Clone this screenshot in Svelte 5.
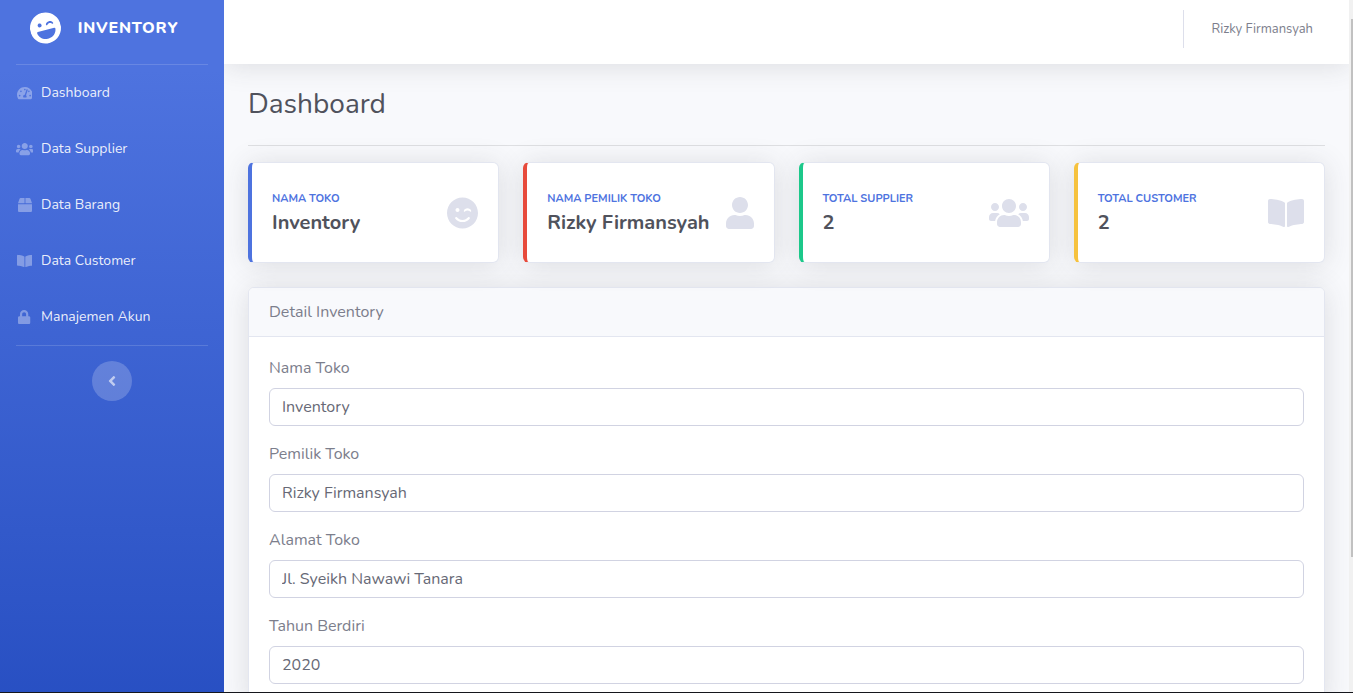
<script>
  const icons = {
    laugh: { w: 496, d: 'M248 8C111 8 0 119 0 256s111 248 248 248 248-111 248-248S385 8 248 8zm20.1 198.1c4-25.2 34.2-42.1 59.9-42.1s55.9 16.9 59.9 42.1c1.7 11.1-11.4 18.3-19.8 10.8l-9.5-8.5c-14.8-13.2-46.2-13.2-61 0L288 217c-8.4 7.4-21.6.3-19.9-10.9zM168 160c17.7 0 32 14.3 32 32s-14.3 32-32 32-32-14.3-32-32 14.3-32 32-32zm88 272h-16c-73.4 0-134-55-142.9-126-1.2-9.5 6.3-18 15.9-18h270c9.6 0 17.1 8.4 15.9 18-8.9 71-69.5 126-142.9 126z' },
    gauge: { w: 576, d: 'M288 32C128.94 32 0 160.94 0 320c0 52.8 14.25 102.26 39.06 144.8 5.61 9.62 16.3 15.2 27.44 15.2h443c11.14 0 21.83-5.58 27.44-15.2C561.75 422.26 576 372.8 576 320c0-159.06-128.94-288-288-288zm0 64c14.71 0 26.58 10.13 30.32 23.65-1.11 2.26-2.64 4.23-3.45 6.67l-9.22 27.67c-5.13 3.49-10.97 6.01-17.64 6.01-17.67 0-32-14.33-32-32S270.33 96 288 96zM96 384c-17.67 0-32-14.33-32-32s14.33-32 32-32 32 14.33 32 32-14.33 32-32 32zm48-160c-17.67 0-32-14.33-32-32s14.33-32 32-32 32 14.33 32 32-14.33 32-32 32zm246.77-72.41l-61.33 184C343.13 347.33 352 364.54 352 384c0 11.72-3.38 22.55-8.88 32H232.88c-5.5-9.45-8.88-20.28-8.88-32 0-33.94 26.5-61.43 59.9-63.59l61.34-184.01c4.17-12.56 17.73-19.45 30.36-15.17 12.57 4.19 19.35 17.79 15.17 30.36zm14.66 57.2l15.52-46.55c3.47-1.29 7.13-2.23 11.05-2.23 17.67 0 32 14.33 32 32s-14.33 32-32 32c-11.38-.01-20.89-6.28-26.57-15.22zM480 384c-17.67 0-32-14.33-32-32s14.33-32 32-32 32 14.33 32 32-14.33 32-32 32z' },
    users: { w: 640, d: 'M96 224c35.3 0 64-28.7 64-64s-28.7-64-64-64-64 28.7-64 64 28.7 64 64 64zm448 0c35.3 0 64-28.7 64-64s-28.7-64-64-64-64 28.7-64 64 28.7 64 64 64zm32 32h-64c-17.6 0-33.5 7.1-45.1 18.6 40.3 22.1 68.9 62 75.1 109.4h66c17.7 0 32-14.3 32-32v-32c0-35.3-28.7-64-64-64zm-256 0c61.9 0 112-50.1 112-112S381.9 32 320 32 208 82.1 208 144s50.1 112 112 112zm76.8 32h-8.3c-20.8 10-43.9 16-68.5 16s-47.6-6-68.5-16h-8.3C179.6 288 128 339.6 128 403.2V432c0 26.5 21.5 48 48 48h288c26.5 0 48-21.5 48-48v-28.8c0-63.6-51.6-115.2-115.2-115.2zm-223.7-13.4C161.5 263.1 145.6 256 128 256H64c-35.3 0-64 28.7-64 64v32c0 17.7 14.3 32 32 32h65.9c6.3-47.4 34.9-87.3 75.2-109.4z' },
    box: { w: 512, d: 'M509.5 184.6L458.9 32.8C452.4 13.2 434.1 0 413.4 0H272v192h238.7c-.4-2.5-.4-5-1.2-7.4zM240 0H98.6c-20.7 0-39 13.2-45.5 32.8L2.5 184.6c-.8 2.4-.8 4.9-1.2 7.4H240V0zM0 224v240c0 26.5 21.5 48 48 48h416c26.5 0 48-21.5 48-48V224H0z' },
    book: { w: 576, d: 'M542.22 32.05c-54.8 3.11-163.72 14.43-230.96 55.59-4.64 2.84-7.27 7.89-7.27 13.17v363.87c0 11.55 12.63 18.85 23.28 13.49 69.18-34.82 169.23-44.32 218.7-46.92 16.89-.89 30.02-14.43 30.02-30.66V62.75c.01-17.71-15.35-31.74-33.77-30.7zM264.73 87.64C197.5 46.48 88.58 35.17 33.78 32.05 15.36 31.01 0 45.04 0 62.75V400.6c0 16.24 13.13 29.78 30.02 30.66 49.49 2.6 149.59 12.11 218.77 46.95 10.62 5.35 23.21-1.94 23.21-13.46V100.63c0-5.29-2.62-10.14-7.27-12.99z' },
    lock: { w: 448, d: 'M400 224h-24v-72C376 68.2 307.8 0 224 0S72 68.2 72 152v72H48c-26.5 0-48 21.5-48 48v192c0 26.5 21.5 48 48 48h352c26.5 0 48-21.5 48-48V272c0-26.5-21.5-48-48-48zm-104 0H152v-72c0-39.7 32.3-72 72-72s72 32.3 72 72v72z' },
    smile: { w: 496, d: 'M0 256c0 137 111 248 248 248s248-111 248-248S385 8 248 8 0 119 0 256zm200-48c0 17.7-14.3 32-32 32s-32-14.3-32-32 14.3-32 32-32 32 14.3 32 32zm158.5 16.5c-14.8-13.2-46.2-13.2-61 0L288 233c-8.3 7.4-21.6.4-19.8-10.8 4-25.2 34.2-42.1 59.9-42.1S384 197 388 222.2c1.7 11-11.4 18.3-19.8 10.8l-9.7-8.5zM157.8 325.8C180.2 352.7 213 368 248 368s67.8-15.4 90.2-42.2c13.6-16.2 38.1 4.2 24.6 20.5C334.3 380.4 292.5 400 248 400s-86.3-19.5-114.8-53.8c-13.6-16.2 11-36.7 24.6-20.4z' },
    user: { w: 448, d: 'M224 256c70.7 0 128-57.3 128-128S294.7 0 224 0 96 57.3 96 128s57.3 128 128 128zm89.6 32h-16.7c-22.2 10.2-46.9 16-72.9 16s-50.6-5.8-72.9-16h-16.7C60.2 288 0 348.2 0 422.4V464c0 26.5 21.5 48 48 48h352c26.5 0 48-21.5 48-48v-41.6c0-74.2-60.2-134.4-134.4-134.4z' },
    left: { w: 256, d: 'M31.7 239l136-136c9.4-9.4 24.6-9.4 33.9 0l22.6 22.6c9.4 9.4 9.4 24.6 0 33.9L127.9 256l96.4 96.4c9.4 9.4 9.4 24.6 0 33.9L201.7 409c-9.4 9.4-24.6 9.4-33.9 0l-136-136c-9.5-9.4-9.5-24.6-.1-34z' }
  };

  const menu = [
    { icon: 'gauge', label: 'Dashboard' },
    { icon: 'users', label: 'Data Supplier' },
    { icon: 'box', label: 'Data Barang' },
    { icon: 'book', label: 'Data Customer' },
    { icon: 'lock', label: 'Manajemen Akun' }
  ];

  const cards = [
    { tone: 'primary', icon: 'smile', label: 'Nama Toko', value: 'Inventory' },
    { tone: 'danger', icon: 'user', label: 'Nama Pemilik Toko', value: 'Rizky Firmansyah' },
    { tone: 'success', icon: 'users', label: 'Total Supplier', value: '2' },
    { tone: 'warning', icon: 'book', label: 'Total Customer', value: '2' }
  ];

  let fields = $state([
    { id: 'nama', label: 'Nama Toko', value: 'Inventory' },
    { id: 'pemilik', label: 'Pemilik Toko', value: 'Rizky Firmansyah' },
    { id: 'alamat', label: 'Alamat Toko', value: 'Jl. Syeikh Nawawi Tanara' },
    { id: 'tahun', label: 'Tahun Berdiri', value: '2020' }
  ]);
</script>

{#snippet icon(name)}
  <svg class="icon" viewBox="0 0 {icons[name].w} 512" aria-hidden="true"><path d={icons[name].d} /></svg>
{/snippet}

<div class="page">
  <nav class="sidebar">
    <a class="brand" href="#top">
      <span class="logo">{@render icon('laugh')}</span>
      <span>INVENTORY</span>
    </a>
    <hr />
    <ul>
      {#each menu as item}
        <li>
          <a href="#{item.icon}"><span class="mark">{@render icon(item.icon)}</span>{item.label}</a>
        </li>
      {/each}
    </ul>
    <hr />
    <button class="toggle" aria-label="Toggle sidebar">{@render icon('left')}</button>
  </nav>

  <div class="content">
    <header class="topbar">
      <a class="account" href="#account">Rizky Firmansyah</a>
    </header>

    <main>
      <h1>Dashboard</h1>
      <hr />
      <section class="cards">
        {#each cards as card}
          <article class="card {card.tone}">
            <div class="info">
              <h2>{card.label}</h2>
              <p>{card.value}</p>
            </div>
            {@render icon(card.icon)}
          </article>
        {/each}
      </section>

      <section class="detail">
        <h2>Detail Inventory</h2>
        <form>
          {#each fields as field}
            <div class="field">
              <label for={field.id}>{field.label}</label>
              <input id={field.id} type="text" bind:value={field.value} />
            </div>
          {/each}
        </form>
      </section>
    </main>
  </div>

  <div class="track"><div class="thumb"></div></div>
</div>

<style>
  :global(body) {
    margin: 0;
  }

  .page {
    box-sizing: border-box;
    display: flex;
    height: 100vh;
    overflow: hidden;
    border-bottom: 1px solid #15161c;
    background: #f8f9fc;
    color: #7c7e8c;
    font-family: Nunito, Lato, sans-serif;
    font-size: 16px;
    line-height: 24px;
  }

  .page :global(*) {
    box-sizing: border-box;
  }

  a {
    color: inherit;
    text-decoration: none;
  }

  h1,
  h2,
  p,
  ul,
  hr {
    margin: 0;
    padding: 0;
  }

  ul {
    list-style: none;
  }

  .icon {
    display: block;
    flex: none;
    height: 1em;
    fill: currentColor;
  }

  .sidebar {
    display: flex;
    flex: none;
    flex-direction: column;
    width: 224px;
    background: linear-gradient(180deg, #4e73df 10%, #224abe 115%);
    color: rgba(255, 255, 255, 0.9);
  }

  .sidebar hr {
    margin: 0 16px;
    border: 0;
    border-top: 1px solid rgba(255, 255, 255, 0.15);
  }

  .brand {
    display: flex;
    align-items: center;
    justify-content: center;
    gap: 17px;
    height: 64px;
    padding: 0 16px 8px 0;
    color: #fff;
    font-weight: 800;
    letter-spacing: 0.05em;
  }

  .logo {
    font-size: 32px;
    transform: rotate(-15deg);
  }

  .sidebar li a {
    display: flex;
    align-items: center;
    gap: 8px;
    padding: 16px;
    font-size: 14px;
  }

  .mark {
    display: flex;
    justify-content: center;
    width: 17px;
    color: rgba(255, 255, 255, 0.35);
  }

  .toggle {
    display: flex;
    align-items: center;
    justify-content: center;
    align-self: center;
    width: 40px;
    height: 40px;
    margin-top: 15px;
    padding: 0;
    border: 0;
    border-radius: 50%;
    background: rgba(255, 255, 255, 0.2);
    color: rgba(255, 255, 255, 0.6);
    font-size: 16px;
  }

  .content {
    flex: 1;
    min-width: 0;
    overflow: hidden;
  }

  .topbar {
    display: flex;
    justify-content: flex-end;
    height: 64px;
    padding: 10px 24px 16px 0;
    background: #fff;
    box-shadow: 0 2px 28px rgba(58, 59, 69, 0.15);
  }

  .account {
    display: flex;
    align-items: center;
    padding: 0 12px 0 28px;
    border-left: 1px solid #dddfeb;
    font-size: 13px;
  }

  main {
    padding: 23px 24px;
  }

  h1 {
    color: #50525c;
    font-size: 28px;
    font-weight: 400;
    line-height: 34px;
  }

  main > hr {
    margin: 24px 0 16px;
    border: 0;
    border-top: 1px solid rgba(0, 0, 0, 0.1);
  }

  .cards {
    display: grid;
    grid-template-columns: repeat(4, minmax(0, 1fr));
    gap: 24px;
    margin-bottom: 24px;
  }

  .card {
    display: flex;
    align-items: center;
    justify-content: space-between;
    min-height: 101px;
    padding: 8px 20px;
    border: 1px solid #e3e6f0;
    border-left: 4px solid;
    border-radius: 6px;
    background: #fff;
    box-shadow: 0 2px 28px rgba(58, 59, 69, 0.15);
  }

  .primary {
    border-left-color: #4e73df;
  }

  .danger {
    border-left-color: #e74a3b;
  }

  .success {
    border-left-color: #1cc88a;
  }

  .warning {
    border-left-color: #f6c23e;
  }

  .card > :global(.icon) {
    color: #dddfeb;
    font-size: 32px;
  }

  .card h2 {
    margin-bottom: 4px;
    color: #4e73df;
    font-size: 11px;
    font-weight: 700;
    line-height: 16px;
    text-transform: uppercase;
  }

  .card p {
    color: #50525c;
    font-size: 20px;
    font-weight: 700;
    line-height: 24px;
    white-space: nowrap;
  }

  .detail {
    border: 1px solid #e3e6f0;
    border-radius: 6px;
    background: #fff;
    box-shadow: 0 2px 28px rgba(58, 59, 69, 0.15);
  }

  .detail h2 {
    padding: 12px 20px;
    border-bottom: 1px solid #e3e6f0;
    border-radius: 5px 5px 0 0;
    background: #f8f9fc;
    font-size: 16px;
    font-weight: 400;
  }

  form {
    display: grid;
    gap: 16px;
    padding: 19px 20px 20px;
  }

  label {
    display: block;
    margin-bottom: 8px;
  }

  input {
    display: block;
    width: 100%;
    height: 38px;
    padding: 6px 12px;
    border: 1px solid #d1d3e2;
    border-radius: 6px;
    background: #fff;
    color: #676976;
    font: inherit;
  }

  .track {
    flex: none;
    width: 4px;
    padding: 19px 0 0 2px;
    background: #f1f1f1;
  }

  .thumb {
    height: 80%;
    background: #c1c1c1;
  }
</style>
